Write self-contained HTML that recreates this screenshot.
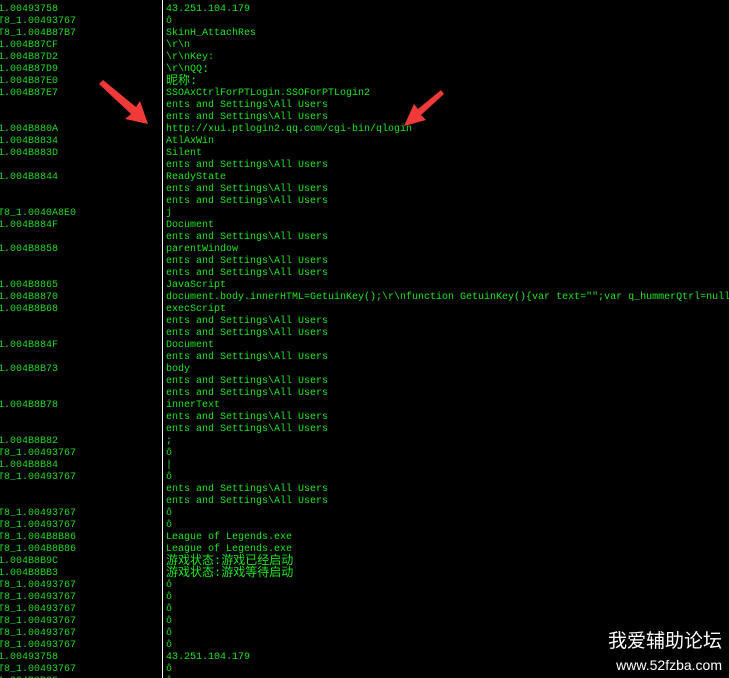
<!DOCTYPE html><html><head><meta charset="utf-8"><style>
html,body{margin:0;padding:0;background:#000;width:729px;height:678px;overflow:hidden;position:relative}
.c{position:absolute;top:4px;font-family:"Liberation Mono","Noto Sans CJK SC",monospace;font-size:10px;line-height:12px;white-space:pre;color:#1ee61e}
#l{left:-2px;color:#22d822}
#r{left:166px}
.k{font-size:12px;line-height:12px;display:inline-block;height:12px;vertical-align:top;margin-top:-1px}
.v{position:absolute;left:162px;top:0;width:1px;height:678px;background:#fff}
.w{position:absolute;color:#fff;font-family:"Liberation Sans","Noto Sans CJK SC",sans-serif;right:7px;text-align:right}
</style></head><body>
<div class="v"></div>
<div class="c" id="l">1.00493758
T8_1.00493767
T8_1.004B87B7
1.004B87CF
1.004B87D2
1.004B87D9
1.004B87E0
1.004B87E7


1.004B880A
1.004B8834
1.004B883D

1.004B8844


T8_1.0040A8E0
1.004B884F

1.004B8858


1.004B8865
1.004B8870
1.004B8B68


1.004B884F

1.004B8B73


1.004B8B78


1.004B8B82
T8_1.00493767
1.004B8B84
T8_1.00493767


T8_1.00493767
T8_1.00493767
T8_1.004B8B86
T8_1.004B8B86
1.004B8B9C
1.004B8BB3
T8_1.00493767
T8_1.00493767
T8_1.00493767
T8_1.00493767
T8_1.00493767
T8_1.00493767
1.00493758
T8_1.00493767
1.004B8BC0</div>
<div class="c" id="r">43.251.104.179
ô
SkinH_AttachRes
\r\n
\r\nKey:
\r\nQQ<span class="k">:</span>
<span class="k">昵称:</span>
SSOAxCtrlForPTLogin.SSOForPTLogin2
ents and Settings\All Users
ents and Settings\All Users
http://xui.ptlogin2.qq.com/cgi-bin/qlogin
AtlAxWin
Silent
ents and Settings\All Users
ReadyState
ents and Settings\All Users
ents and Settings\All Users
j
Document
ents and Settings\All Users
parentWindow
ents and Settings\All Users
ents and Settings\All Users
JavaScript
document.body.innerHTML=GetuinKey();\r\nfunction GetuinKey(){var text="";var q_hummerQtrl=null
execScript
ents and Settings\All Users
ents and Settings\All Users
Document
ents and Settings\All Users
body
ents and Settings\All Users
ents and Settings\All Users
innerText
ents and Settings\All Users
ents and Settings\All Users
;
ô
|
ô
ents and Settings\All Users
ents and Settings\All Users
ô
ô
League of Legends.exe
League of Legends.exe
<span class="k">游戏状态:游戏已经启动</span>
<span class="k">游戏状态:游戏等待启动</span>
ô
ô
ô
ô
ô
ô
43.251.104.179
ô
ô</div>
<svg style="position:absolute;left:0;top:0" width="729" height="678">
<polygon fill="#f03a3a" points="99,84 103,80 136,107 140,101 148,124 125,119 131,114"/>
<polygon fill="#f03a3a" points="444,94 441,90 418,109 414,104 404,126 426,120 421,115"/>
</svg>
<div class="w" style="top:630px;font-size:19px;line-height:24px">我爱辅助论坛</div>
<div class="w" style="top:656px;font-size:14px;line-height:18px">www.52fzba.com</div>
</body></html>
